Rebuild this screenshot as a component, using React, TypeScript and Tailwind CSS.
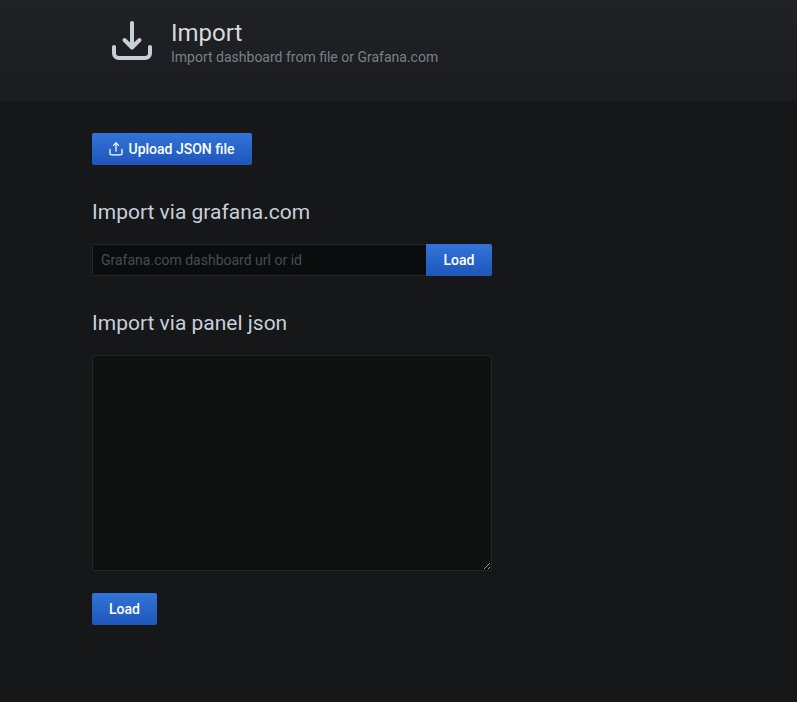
function Btn({ children, className }: { children: React.ReactNode; className: string }) {
  return (
    <button className={`flex h-8 items-center justify-center rounded-[2px] bg-gradient-to-b from-[#3274d9] to-[#1f56ba] text-sm font-medium text-white ${className}`}>
      {children}
    </button>
  );
}

export default function App() {
  return (
    <div className="h-[702px] w-[797px] overflow-hidden bg-[#161719] font-['Roboto',sans-serif]">
      <header className="flex h-[101px] items-start bg-gradient-to-b from-[#202226] to-[#1b1c20] pl-[110px] pt-[21px]">
        <svg width="44" height="42" viewBox="0 0 44 42" fill="none" stroke="#c7d0d9" strokeWidth="4" strokeLinecap="round" strokeLinejoin="round">
          <path d="M22 2v24" />
          <path d="M14.5 19l7.5 7.5 7.5-7.5" />
          <path d="M4 26v6c0 3 2 5 5 5h26c3 0 5-2 5-5v-6" />
        </svg>
        <div className="ml-[17px]">
          <h1 className="text-2xl leading-[24px] text-[#d8d9da]">Import</h1>
          <p className="mt-[2px] text-sm leading-5 text-[#7b8087]">Import dashboard from file or Grafana.com</p>
        </div>
      </header>

      <main className="w-[492px] pl-[92px] pt-8">
        <Btn className="w-40">
          <svg className="mr-[5px]" width="14" height="14" viewBox="0 0 14 14" fill="none" stroke="#fff" strokeWidth="1.3" strokeLinecap="round" strokeLinejoin="round">
            <path d="M7 9V1" />
            <path d="M4.5 3.4L7 1l2.5 2.4" />
            <path d="M1 7.5v4c0 .8.6 1.4 1.4 1.4h9.2c.8 0 1.4-.6 1.4-1.4v-4" />
          </svg>
          Upload JSON file
        </Btn>

        <h2 className="mt-[33px] text-[21px] leading-7 text-[#c7d0d9]">Import via grafana.com</h2>
        <div className="mt-[18px] flex">
          <input
            placeholder="Grafana.com dashboard url or id"
            className="h-8 min-w-0 flex-1 rounded-l-[2px] border border-r-0 border-[#262628] bg-[#0b0c0e] px-2 text-sm text-[#c7d0d9] outline-none placeholder:text-[#464c54]"
          />
          <Btn className="w-[66px] rounded-l-none">Load</Btn>
        </div>

        <h2 className="mt-[33px] text-[21px] leading-7 text-[#c7d0d9]">Import via panel json</h2>
        <textarea className="mt-[18px] block h-[216px] w-full rounded-[2px] border border-[#262628] bg-[#0f1110] outline-none" />
        <Btn className="mt-[22px] w-[65px]">Load</Btn>
      </main>
    </div>
  );
}
